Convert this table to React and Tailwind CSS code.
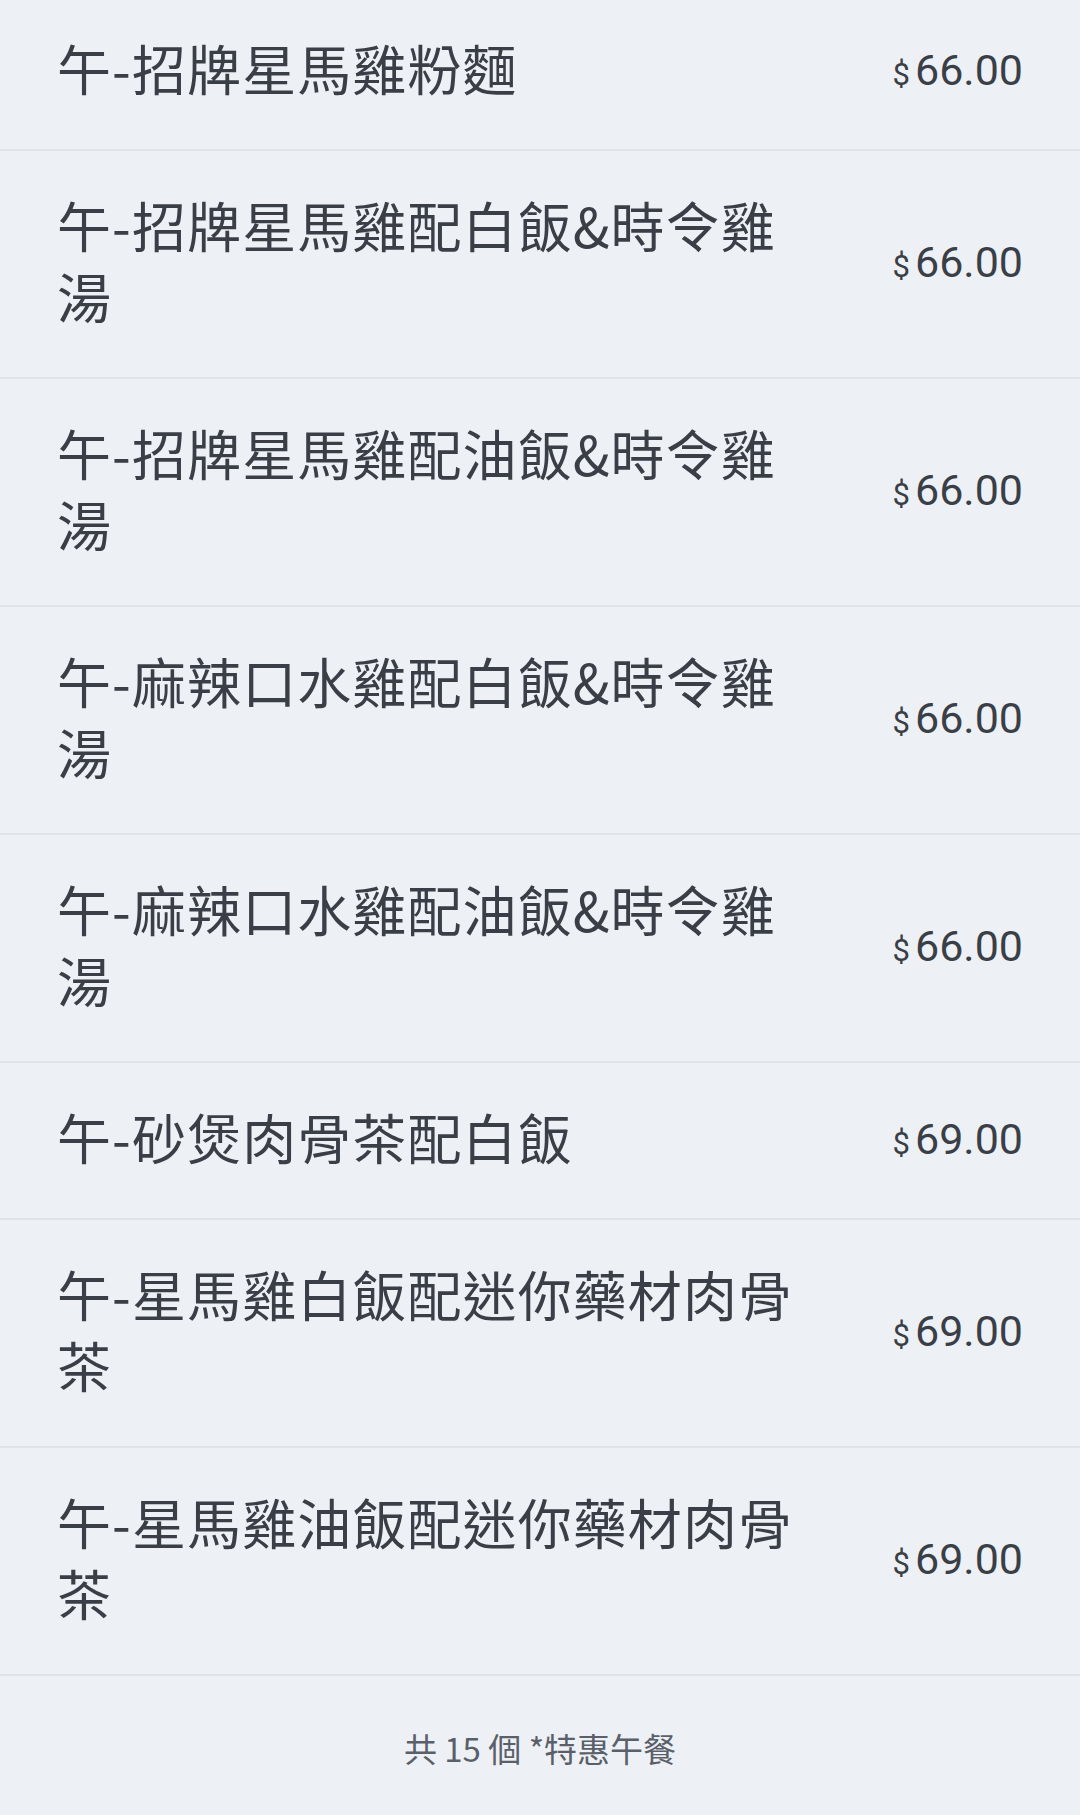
import React from "react";

const items = [
  { name: "午-招牌星馬雞粉麵", price: "66.00" },
  { name: "午-招牌星馬雞配白飯&時令雞湯", price: "66.00" },
  { name: "午-招牌星馬雞配油飯&時令雞湯", price: "66.00" },
  { name: "午-麻辣口水雞配白飯&時令雞湯", price: "66.00" },
  { name: "午-麻辣口水雞配油飯&時令雞湯", price: "66.00" },
  { name: "午-砂煲肉骨茶配白飯", price: "69.00" },
  { name: "午-星馬雞白飯配迷你藥材肉骨茶", price: "69.00" },
  { name: "午-星馬雞油飯配迷你藥材肉骨茶", price: "69.00" },
];

const MenuRow = ({ name, price, first }) => (
  <div
    className={`flex items-center gap-[80px] px-[57px] pb-[46px] border-b-2 border-[#e0e4e9] ${
      first ? "pt-[32px]" : "pt-[38px]"
    }`}
  >
    <span className="flex-1 text-[54px] leading-[71px] tracking-[1.1px] text-[#3a3f47] break-all">
      {name}
    </span>
    <span className="shrink-0 mt-[5px] flex items-baseline text-[#3a3f47] font-['Roboto',sans-serif]">
      <span className="text-[31px] mr-[5px]">$</span>
      <span className="text-[43px]">{price}</span>
    </span>
  </div>
);

export default function App() {
  return (
    <div className="min-h-[1815px] bg-[#edf1f5] font-['Noto_Sans_CJK_TC','Noto_Sans',sans-serif]">
      {items.map((item, i) => (
        <MenuRow key={i} {...item} first={i === 0} />
      ))}
      <div className="flex justify-center pt-[52px] pb-[50px] text-[33px] leading-[40px] text-[#5a6069]">
        共 15 個 *特惠午餐
      </div>
    </div>
  );
}
